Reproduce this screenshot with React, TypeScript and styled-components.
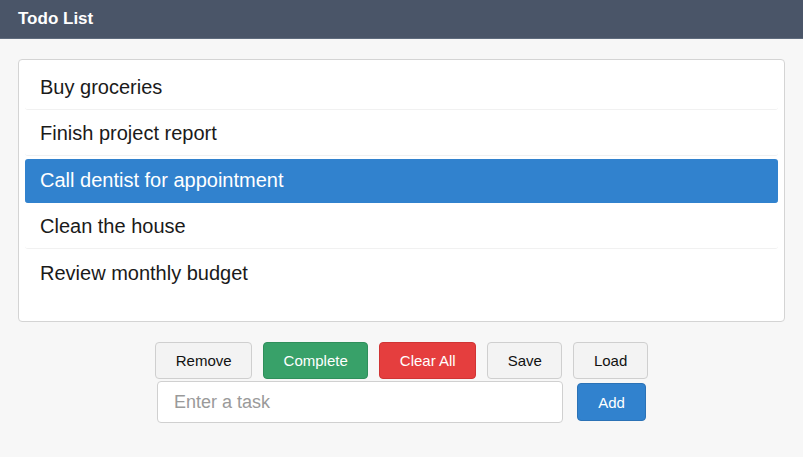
import { useState } from "react";
import styled, { createGlobalStyle } from "styled-components";

const GlobalStyle = createGlobalStyle`
  html, body {
    margin: 0;
    padding: 0;
    background: #f7f7f7;
    font-family: "Liberation Sans", Arial, sans-serif;
  }
  * {
    box-sizing: border-box;
  }
`;

const Header = styled.div`
  height: 39px;
  background: #4a5568;
  color: #fff;
  font-size: 17px;
  font-weight: 700;
  display: flex;
  align-items: center;
  padding-left: 18px;
  border-bottom: 1px solid #5f6b7d;
`;

const Main = styled.div`
  padding: 20px 18px 0;
`;

const List = styled.div`
  height: 263px;
  background: #fff;
  border: 1px solid #d4d4d4;
  border-radius: 4px;
  padding: 6px;
`;

const Item = styled.div<{ selected: boolean }>`
  height: 44px;
  margin-bottom: 2.4px;
  padding: 0 15px;
  display: flex;
  align-items: center;
  font-size: 20px;
  color: ${(p) => (p.selected ? "#fff" : "#1a1a1a")};
  background: ${(p) => (p.selected ? "#3182ce" : "transparent")};
  border-bottom: 1px solid ${(p) => (p.selected ? "#3182ce" : "#f1f1f1")};
  border-radius: 3px;
  cursor: pointer;
  &:last-child {
    border-bottom-color: transparent;
  }
`;

const Controls = styled.div`
  display: flex;
  flex-direction: column;
  align-items: center;
  padding-top: 20px;
`;

const ButtonRow = styled.div`
  display: flex;
  gap: 11px;
`;

const Button = styled.button<{ tone?: "green" | "red" | "blue" }>`
  height: 37px;
  padding: 0 19.5px;
  font-family: inherit;
  font-size: 15px;
  border-radius: 4px;
  cursor: pointer;
  color: ${(p) => (p.tone ? "#fff" : "#111")};
  background: ${(p) =>
    p.tone === "green"
      ? "#38a169"
      : p.tone === "red"
      ? "#e53e3e"
      : p.tone === "blue"
      ? "#3182ce"
      : "#f3f3f3"};
  border: 1px solid
    ${(p) =>
      p.tone === "green"
        ? "#2f8f5b"
        : p.tone === "red"
        ? "#d03434"
        : p.tone === "blue"
        ? "#2b72b6"
        : "#cfcfcf"};
`;

const InputRow = styled.div`
  display: flex;
  align-items: center;
  gap: 14px;
  margin-top: 2px;
`;

const TaskInput = styled.input`
  width: 406px;
  height: 42px;
  padding: 0 16px;
  font-family: inherit;
  font-size: 18px;
  background: #fff;
  border: 1px solid #d0d0d0;
  border-radius: 4px;
  outline: none;
  &::placeholder {
    color: #9a9a9a;
  }
`;

const AddButton = styled(Button)`
  width: 69px;
  height: 38px;
  padding: 0;
`;

const initialTodos = [
  "Buy groceries",
  "Finish project report",
  "Call dentist for appointment",
  "Clean the house",
  "Review monthly budget",
];

export default function App() {
  const [todos] = useState(initialTodos);
  const [selected, setSelected] = useState(2);

  return (
    <>
      <GlobalStyle />
      <Header>Todo List</Header>
      <Main>
        <List>
          {todos.map((t, i) => (
            <Item key={t} selected={i === selected} onClick={() => setSelected(i)}>
              {t}
            </Item>
          ))}
        </List>
        <Controls>
          <ButtonRow>
            <Button>Remove</Button>
            <Button tone="green">Complete</Button>
            <Button tone="red">Clear All</Button>
            <Button>Save</Button>
            <Button>Load</Button>
          </ButtonRow>
          <InputRow>
            <TaskInput placeholder="Enter a task" />
            <AddButton tone="blue">Add</AddButton>
          </InputRow>
        </Controls>
      </Main>
    </>
  );
}
